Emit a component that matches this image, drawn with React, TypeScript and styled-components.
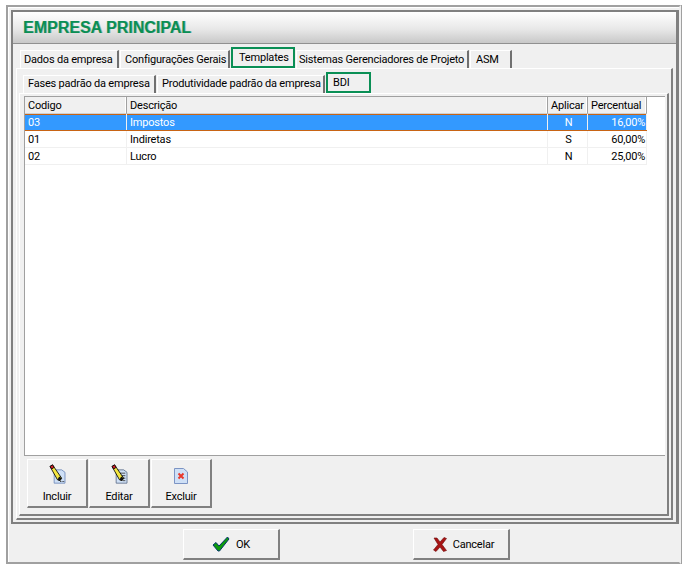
import styled, { createGlobalStyle } from 'styled-components';

const GlobalStyle = createGlobalStyle`
  html, body {
    margin: 0;
    background: #fff;
  }
  body {
    font-family: Roboto, "Liberation Sans", Arial, sans-serif;
    font-size: 11px;
    letter-spacing: -0.2px;
    color: #000;
  }
`;

const linhas = [
  { codigo: '03', descricao: 'Impostos', aplicar: 'N', percentual: '16,00%', selecionada: true },
  { codigo: '01', descricao: 'Indiretas', aplicar: 'S', percentual: '60,00%' },
  { codigo: '02', descricao: 'Lucro', aplicar: 'N', percentual: '25,00%' },
];

const abas = [
  { titulo: 'Dados da empresa', largura: 99, recuo: 3 },
  { titulo: 'Configurações Gerais', largura: 110, recuo: 4 },
  { titulo: 'Templates', largura: 64, recuo: 6, ativa: true },
  { titulo: 'Sistemas Gerenciadores de Projeto', largura: 173, recuo: 2 },
  { titulo: 'ASM', largura: 42, recuo: 5 },
];

const subAbas = [
  { titulo: 'Fases padrão da empresa', largura: 133, recuo: 4 },
  { titulo: 'Produtividade padrão da empresa', largura: 168, recuo: 4 },
  { titulo: 'BDI', largura: 45, recuo: 5, ativa: true },
];

function IconeLapis() {
  return (
    <g>
      <path d="M1 3 L4 1 L15 17 L13 20 L10 19 Z" fill="#f4e640" stroke="#000" strokeWidth="1" />
      <path d="M1 3 L4 1 L6 4 L3 6 Z" fill="#d0202a" stroke="#000" strokeWidth="1" />
      <path d="M10 19 L13 20 L15 17 L12 15 Z" fill="#111" />
    </g>
  );
}

function IconeIncluir() {
  return (
    <svg width="17" height="20" viewBox="0 0 20 24">
      <path d="M6 7 H15 L19 10 V23 H6 Z" fill="#cfe0f6" stroke="#6c88b8" />
      <path d="M13 21 h1 M15 21 h1 M17 21 h1" stroke="#000" />
      <IconeLapis />
    </svg>
  );
}

function IconeEditar() {
  return (
    <svg width="17" height="20" viewBox="0 0 20 24">
      <path d="M6 7 H15 L19 10 V23 H6 Z" fill="#cfe0f6" stroke="#5c6c88" />
      <path d="M10 11 h7 M12 14 h5 M13 17 h4 M14 20 h3" stroke="#333" />
      <IconeLapis />
    </svg>
  );
}

function IconeExcluir() {
  return (
    <svg width="14" height="16" viewBox="0 0 14 16">
      <path d="M.5.5 H9.5 L13.5 4 V15.5 H.5 Z" fill="#cfe0f6" stroke="#7c94c4" />
      <path d="M4.5 5.5 L9.5 10.5 M9.5 5.5 L4.5 10.5" stroke="#e8392c" strokeWidth="2" />
    </svg>
  );
}

function IconeOk() {
  return (
    <svg width="18" height="16" viewBox="0 0 18 16">
      <path d="M1 9 L4 6.5 L7 10 L15.5 1 L17 3 L7.5 15 L6 15 Z" fill="#0c9a0c" stroke="#04346c" strokeWidth="1" />
    </svg>
  );
}

function IconeCancelar() {
  return (
    <svg width="14" height="15" viewBox="0 0 14 15">
      <path d="M1 1 L4 1 L7 5 L11 0.5 L13.5 1.5 L9 7.5 L13.5 13.5 L10.5 14.5 L7 10 L3 14.5 L0.5 13 L5 7.5 Z" fill="#a81414" stroke="#6c0c0c" strokeWidth="0.6" />
    </svg>
  );
}

export default function App() {
  return (
    <>
      <GlobalStyle />
      <Janela>
        <Moldura>
          <Cabecalho>
            <Titulo>EMPRESA PRINCIPAL</Titulo>
          </Cabecalho>
          <AreaAbas>
            <LinhaAbas>
              {abas.map((aba) => (
                <Aba key={aba.titulo} $largura={aba.largura} $recuo={aba.recuo} $subida={0} $ativa={aba.ativa}>
                  {aba.titulo}
                </Aba>
              ))}
            </LinhaAbas>
            <PainelSub>
              <LinhaSubAbas>
                {subAbas.map((aba) => (
                  <Aba key={aba.titulo} $largura={aba.largura} $recuo={aba.recuo} $subida={2} $ativa={aba.ativa}>
                    {aba.titulo}
                  </Aba>
                ))}
              </LinhaSubAbas>
              <PainelGrade>
                <Grade>
                  <LinhaTitulos>
                    <Titulos>Codigo</Titulos>
                    <Titulos>Descrição</Titulos>
                    <Titulos>Aplicar</Titulos>
                    <Titulos>Percentual</Titulos>
                  </LinhaTitulos>
                  {linhas.map((linha) => (
                    <Linha key={linha.codigo} $selecionada={linha.selecionada}>
                      <Celula>{linha.codigo}</Celula>
                      <Celula>{linha.descricao}</Celula>
                      <Celula $alinhar="center">{linha.aplicar}</Celula>
                      <Celula $alinhar="right">{linha.percentual}</Celula>
                    </Linha>
                  ))}
                </Grade>
                <BarraBotoes>
                  <BotaoBarra>
                    <IconeSlot>
                      <IconeIncluir />
                    </IconeSlot>
                    Incluir
                  </BotaoBarra>
                  <BotaoBarra>
                    <IconeSlot>
                      <IconeEditar />
                    </IconeSlot>
                    Editar
                  </BotaoBarra>
                  <BotaoBarra>
                    <IconeSlot>
                      <IconeExcluir />
                    </IconeSlot>
                    Excluir
                  </BotaoBarra>
                </BarraBotoes>
              </PainelGrade>
            </PainelSub>
          </AreaAbas>
        </Moldura>
        <Rodape>
          <BotaoRodape>
            <IconeOk />
            OK
          </BotaoRodape>
          <BotaoRodape $recuo={5}>
            <IconeCancelar />
            Cancelar
          </BotaoRodape>
        </Rodape>
      </Janela>
    </>
  );
}

const Janela = styled.div`
  box-sizing: border-box;
  width: 675px;
  height: 559px;
  margin: 5px 0 0 6px;
  display: flex;
  flex-direction: column;
  background: #f0f0f0;
  border-top: 2px solid #a0a0a0;
  border-left: 2px solid #a0a0a0;
  border-right: 2px solid #f0f0f0;
  border-bottom: 2px solid #a0a0a0;
  box-shadow: inset 1px 1px 0 #fff, 1px 0 0 #a0a0a0;
`;

const Moldura = styled.div`
  box-sizing: border-box;
  width: 668px;
  height: 514px;
  margin: 3px 0 0 3px;
  display: flex;
  flex-direction: column;
  border: 2px solid #808080;
  border-right-width: 3px;
  box-shadow: inset 1px 1px 0 #fff;
`;

const Cabecalho = styled.div`
  flex: none;
  height: 31px;
  display: flex;
  align-items: center;
  padding-left: 10px;
  background: linear-gradient(#ffffff, #e8e8e8 55%, #c8c8c8);
  border-bottom: 1px solid #909090;
`;

const Titulo = styled.h1`
  margin: 0;
  font-family: "Liberation Sans", Arial, sans-serif;
  font-size: 16px;
  font-weight: bold;
  letter-spacing: 0;
  color: #0a8f55;
  text-shadow: 1px 0 0 rgba(8, 100, 60, 0.35);
`;

const AreaAbas = styled.div`
  flex: 1;
  min-height: 0;
  display: flex;
  flex-direction: column;
  padding: 3px 1px 0 1px;
  background: #f0f0f0;
`;

const LinhaAbas = styled.div`
  flex: none;
  height: 21px;
  display: flex;
  align-items: flex-end;
  padding-left: 6px;
  gap: 1px;
`;

const Aba = styled.div<{ $largura: number; $recuo: number; $subida: number; $ativa?: boolean }>`
  box-sizing: border-box;
  width: ${(p) => p.$largura}px;
  height: ${(p) => (p.$ativa ? 21 : 18)}px;
  display: flex;
  align-items: center;
  padding: 0 0 ${(p) => (p.$ativa ? 1 : p.$subida)}px ${(p) => p.$recuo}px;
  white-space: nowrap;
  background: #f0f0f0;
  border-top: ${(p) => (p.$ativa ? '2px solid #0a8f55' : '1px solid #fff')};
  border-left: ${(p) => (p.$ativa ? '2px solid #0a8f55' : '1px solid #fff')};
  border-right: ${(p) => (p.$ativa ? '2px solid #0a8f55' : '2px solid #707070')};
  border-bottom: ${(p) => (p.$ativa ? '2px solid #0a8f55' : 'none')};
`;

const PainelSub = styled.div`
  flex: 1;
  min-height: 0;
  display: flex;
  flex-direction: column;
  margin: 0 2px 2px 2px;
  padding: 3px 2px 2px 2px;
  border-top: 1px solid #fff;
  border-left: 1px solid #fff;
  border-right: 2px solid #808080;
  border-bottom: 2px solid #808080;
`;

const LinhaSubAbas = styled.div`
  flex: none;
  height: 21px;
  display: flex;
  align-items: flex-end;
  padding-left: 4px;
  gap: 1px;
`;

const PainelGrade = styled.div`
  flex: 1;
  min-height: 0;
  display: flex;
  flex-direction: column;
  padding: 3px 2px 2px 4px;
  border-top: 1px solid #fff;
  border-left: 1px solid #fff;
  border-right: 2px solid #808080;
  border-bottom: 2px solid #808080;
`;

const Grade = styled.div`
  flex: 1;
  min-height: 0;
  margin-top: -1px;
  background: #fff;
  border-top: 1px solid #a0a0a0;
  border-left: 1px solid #a0a0a0;
`;

const colunas = '102px 421px 40px 59px';

const LinhaTitulos = styled.div`
  display: grid;
  grid-template-columns: ${colunas};
  width: 622px;
  height: 17px;
`;

const Titulos = styled.div`
  box-sizing: border-box;
  padding: 1px 0 0 3px;
  line-height: 15px;
  background: #f0f0f0;
  border-right: 1px solid #a0a0a0;
  border-bottom: 1px solid #d0d0d0;
  box-shadow: inset -1px 0 0 #fff;
`;

const Linha = styled.div<{ $selecionada?: boolean }>`
  box-sizing: border-box;
  display: grid;
  grid-template-columns: ${colunas};
  width: 622px;
  height: 17px;
  background: ${(p) => (p.$selecionada ? '#3399ff' : '#fff')};
  color: ${(p) => (p.$selecionada ? '#fff' : '#000')};
  border-bottom: 1px solid ${(p) => (p.$selecionada ? '#c86414' : '#f0f0f0')};
  box-shadow: ${(p) => (p.$selecionada ? 'inset 0 1px 0 #c86414' : 'none')};
`;

const Celula = styled.div<{ $alinhar?: string }>`
  box-sizing: border-box;
  padding: 1px 1px 0 3px;
  line-height: 15px;
  text-align: ${(p) => p.$alinhar ?? 'left'};
  border-right: 1px solid #f0f0f0;
`;

const BarraBotoes = styled.div`
  flex: none;
  box-sizing: border-box;
  height: 57px;
  display: flex;
  align-items: flex-start;
  padding: 3px 0 0 3px;
  gap: 1px;
  border-top: 1px solid #a0a0a0;
`;

const Botao = styled.button`
  box-sizing: border-box;
  display: flex;
  align-items: center;
  padding: 0;
  font: inherit;
  letter-spacing: inherit;
  color: #000;
  background: #f0f0f0;
  border-top: 1px solid #fff;
  border-left: 1px solid #fff;
  border-right: 2px solid #808080;
  border-bottom: 2px solid #808080;
`;

const BotaoBarra = styled(Botao)`
  width: 61px;
  height: 49px;
  flex: none;
  flex-direction: column;
  justify-content: flex-end;
  padding-bottom: 3px;
`;

const IconeSlot = styled.span`
  height: 20px;
  margin-bottom: 6px;
  display: flex;
  align-items: flex-end;
`;

const Rodape = styled.div`
  flex: 1;
  display: flex;
  align-items: flex-start;
  padding: 5px 0 0 175px;
  gap: 133px;
`;

const BotaoRodape = styled(Botao)<{ $recuo?: number }>`
  width: 97px;
  height: 31px;
  justify-content: center;
  gap: 6px;
  padding-left: ${(p) => p.$recuo ?? 0}px;
`;
